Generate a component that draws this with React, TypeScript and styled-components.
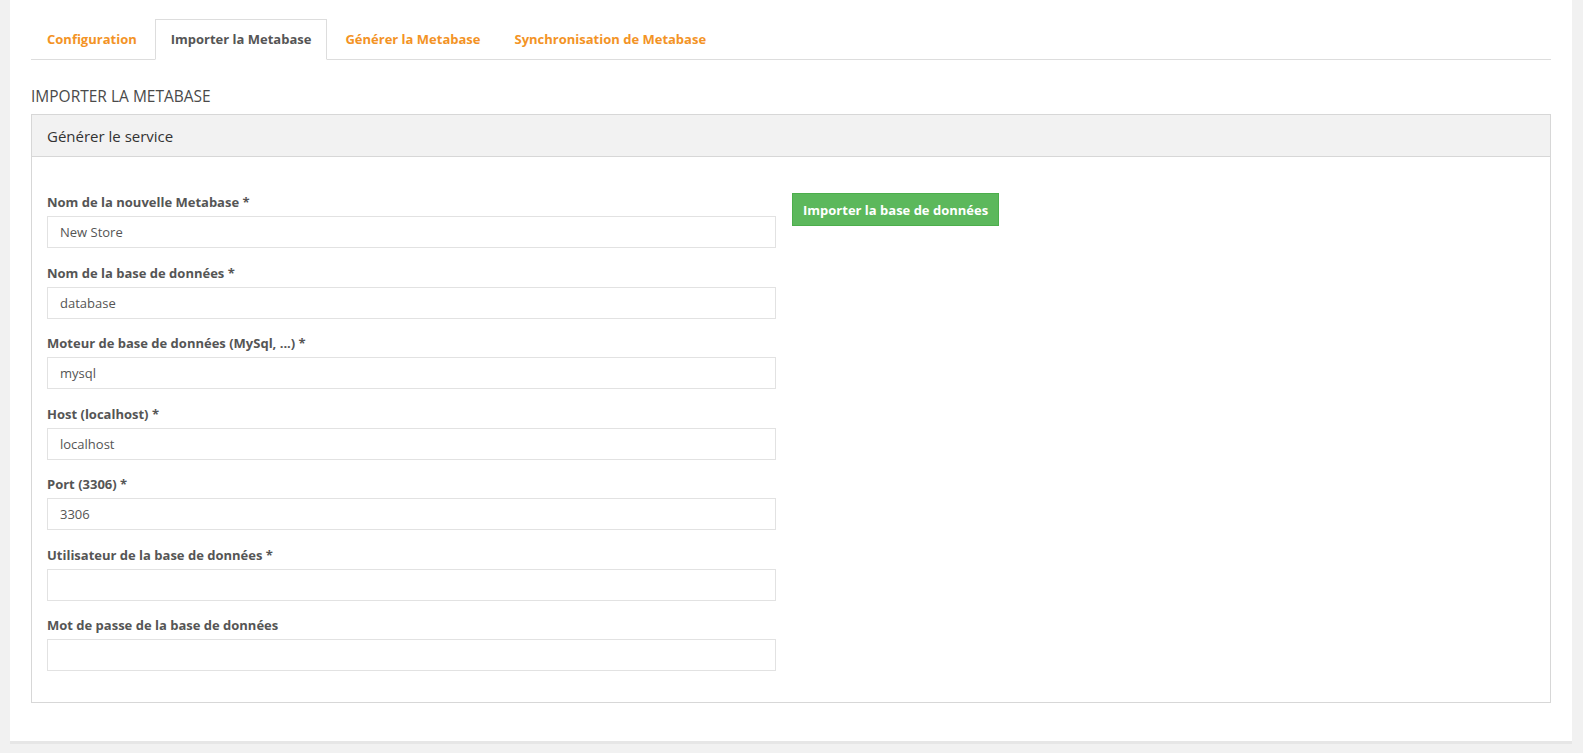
import React from "react";
import styled, { createGlobalStyle } from "styled-components";

const Global = createGlobalStyle`
  html, body { margin: 0; padding: 0; background: #f1f1f1; }
  body { font-family: "Open Sans", "Noto Sans", sans-serif; color: #555; }
  * { box-sizing: border-box; }
`;

const Page = styled.div`
  padding: 0 11px 10px 10px;
`;

const Card = styled.div`
  background: #fff;
  padding: 19px 21px 38px 21px;
  box-shadow: 0 3px 0 #e6e6e6;
`;

const Tabs = styled.ul`
  display: flex;
  list-style: none;
  margin: 0;
  padding: 0;
  border-bottom: 1px solid #dddddd;
`;

const Tab = styled.li<{ $active?: boolean }>`
  margin-right: 2px;
  margin-bottom: -1px;
  padding: 10px 15px;
  font-size: 13px;
  line-height: 19px;
  font-weight: 700;
  border: 1px solid ${(p) => (p.$active ? "#dddddd" : "transparent")};
  border-bottom-color: ${(p) => (p.$active ? "#fff" : "transparent")};
  background: ${(p) => (p.$active ? "#fff" : "transparent")};
  color: ${(p) => (p.$active ? "#555555" : "#f39325")};
  cursor: pointer;
`;

const SectionTitle = styled.h3`
  margin: 26px 0 8px 0;
  font-size: 15.5px;
  line-height: 20px;
  font-weight: 400;
  color: #4a4a4a;
  text-transform: uppercase;
`;

const Panel = styled.div`
  border: 1px solid #d7d7d7;
`;

const PanelHeading = styled.div`
  background: #f2f2f2;
  border-bottom: 1px solid #d7d7d7;
  padding: 0 15px;
  height: 42px;
  display: flex;
  align-items: center;
  font-size: 15px;
  color: #333;
`;

const PanelBody = styled.div`
  display: flex;
  align-items: flex-start;
  gap: 16px;
  padding: 36px 15px 15px 15px;
`;

const FormColumn = styled.div`
  width: calc(50% - 15px);
  display: flex;
  flex-direction: column;
`;

const FormGroup = styled.div`
  display: flex;
  flex-direction: column;
  margin-bottom: 15.5px;
`;

const Label = styled.label`
  font-size: 13px;
  line-height: 18px;
  font-weight: 700;
  color: #555;
  margin-bottom: 5px;
`;

const Input = styled.input`
  height: 32px;
  border: 1px solid #e2e2e2;
  padding: 0 12px;
  font-family: "Open Sans", "Noto Sans", sans-serif;
  font-size: 13px;
  color: #555;
  background: #fff;
  outline: none;
`;

const Button = styled.button`
  background: #5cb85c;
  border: 1px solid #4cae4c;
  color: #fff;
  font-family: "Open Sans", "Noto Sans", sans-serif;
  font-weight: 700;
  font-size: 13px;
  line-height: 18px;
  padding: 6px 10px;
  height: 33px;
  cursor: pointer;
  white-space: nowrap;
`;

const tabs = [
  "Configuration",
  "Importer la Metabase",
  "Générer la Metabase",
  "Synchronisation de Metabase",
];

const fields: { label: string; value: string }[] = [
  { label: "Nom de la nouvelle Metabase *", value: "New Store" },
  { label: "Nom de la base de données *", value: "database" },
  { label: "Moteur de base de données (MySql, ...) *", value: "mysql" },
  { label: "Host (localhost) *", value: "localhost" },
  { label: "Port (3306) *", value: "3306" },
  { label: "Utilisateur de la base de données *", value: "" },
  { label: "Mot de passe de la base de données", value: "" },
];

export default function App() {
  return (
    <Page>
      <Global />
      <Card>
        <Tabs>
          {tabs.map((t, i) => (
            <Tab key={t} $active={i === 1}>
              {t}
            </Tab>
          ))}
        </Tabs>
        <SectionTitle>Importer la Metabase</SectionTitle>
        <Panel>
          <PanelHeading>Générer le service</PanelHeading>
          <PanelBody>
            <FormColumn>
              {fields.map((f) => (
                <FormGroup key={f.label}>
                  <Label>{f.label}</Label>
                  <Input
                    type={f.label.startsWith("Mot de passe") ? "password" : "text"}
                    defaultValue={f.value}
                  />
                </FormGroup>
              ))}
            </FormColumn>
            <Button>Importer la base de données</Button>
          </PanelBody>
        </Panel>
      </Card>
    </Page>
  );
}
